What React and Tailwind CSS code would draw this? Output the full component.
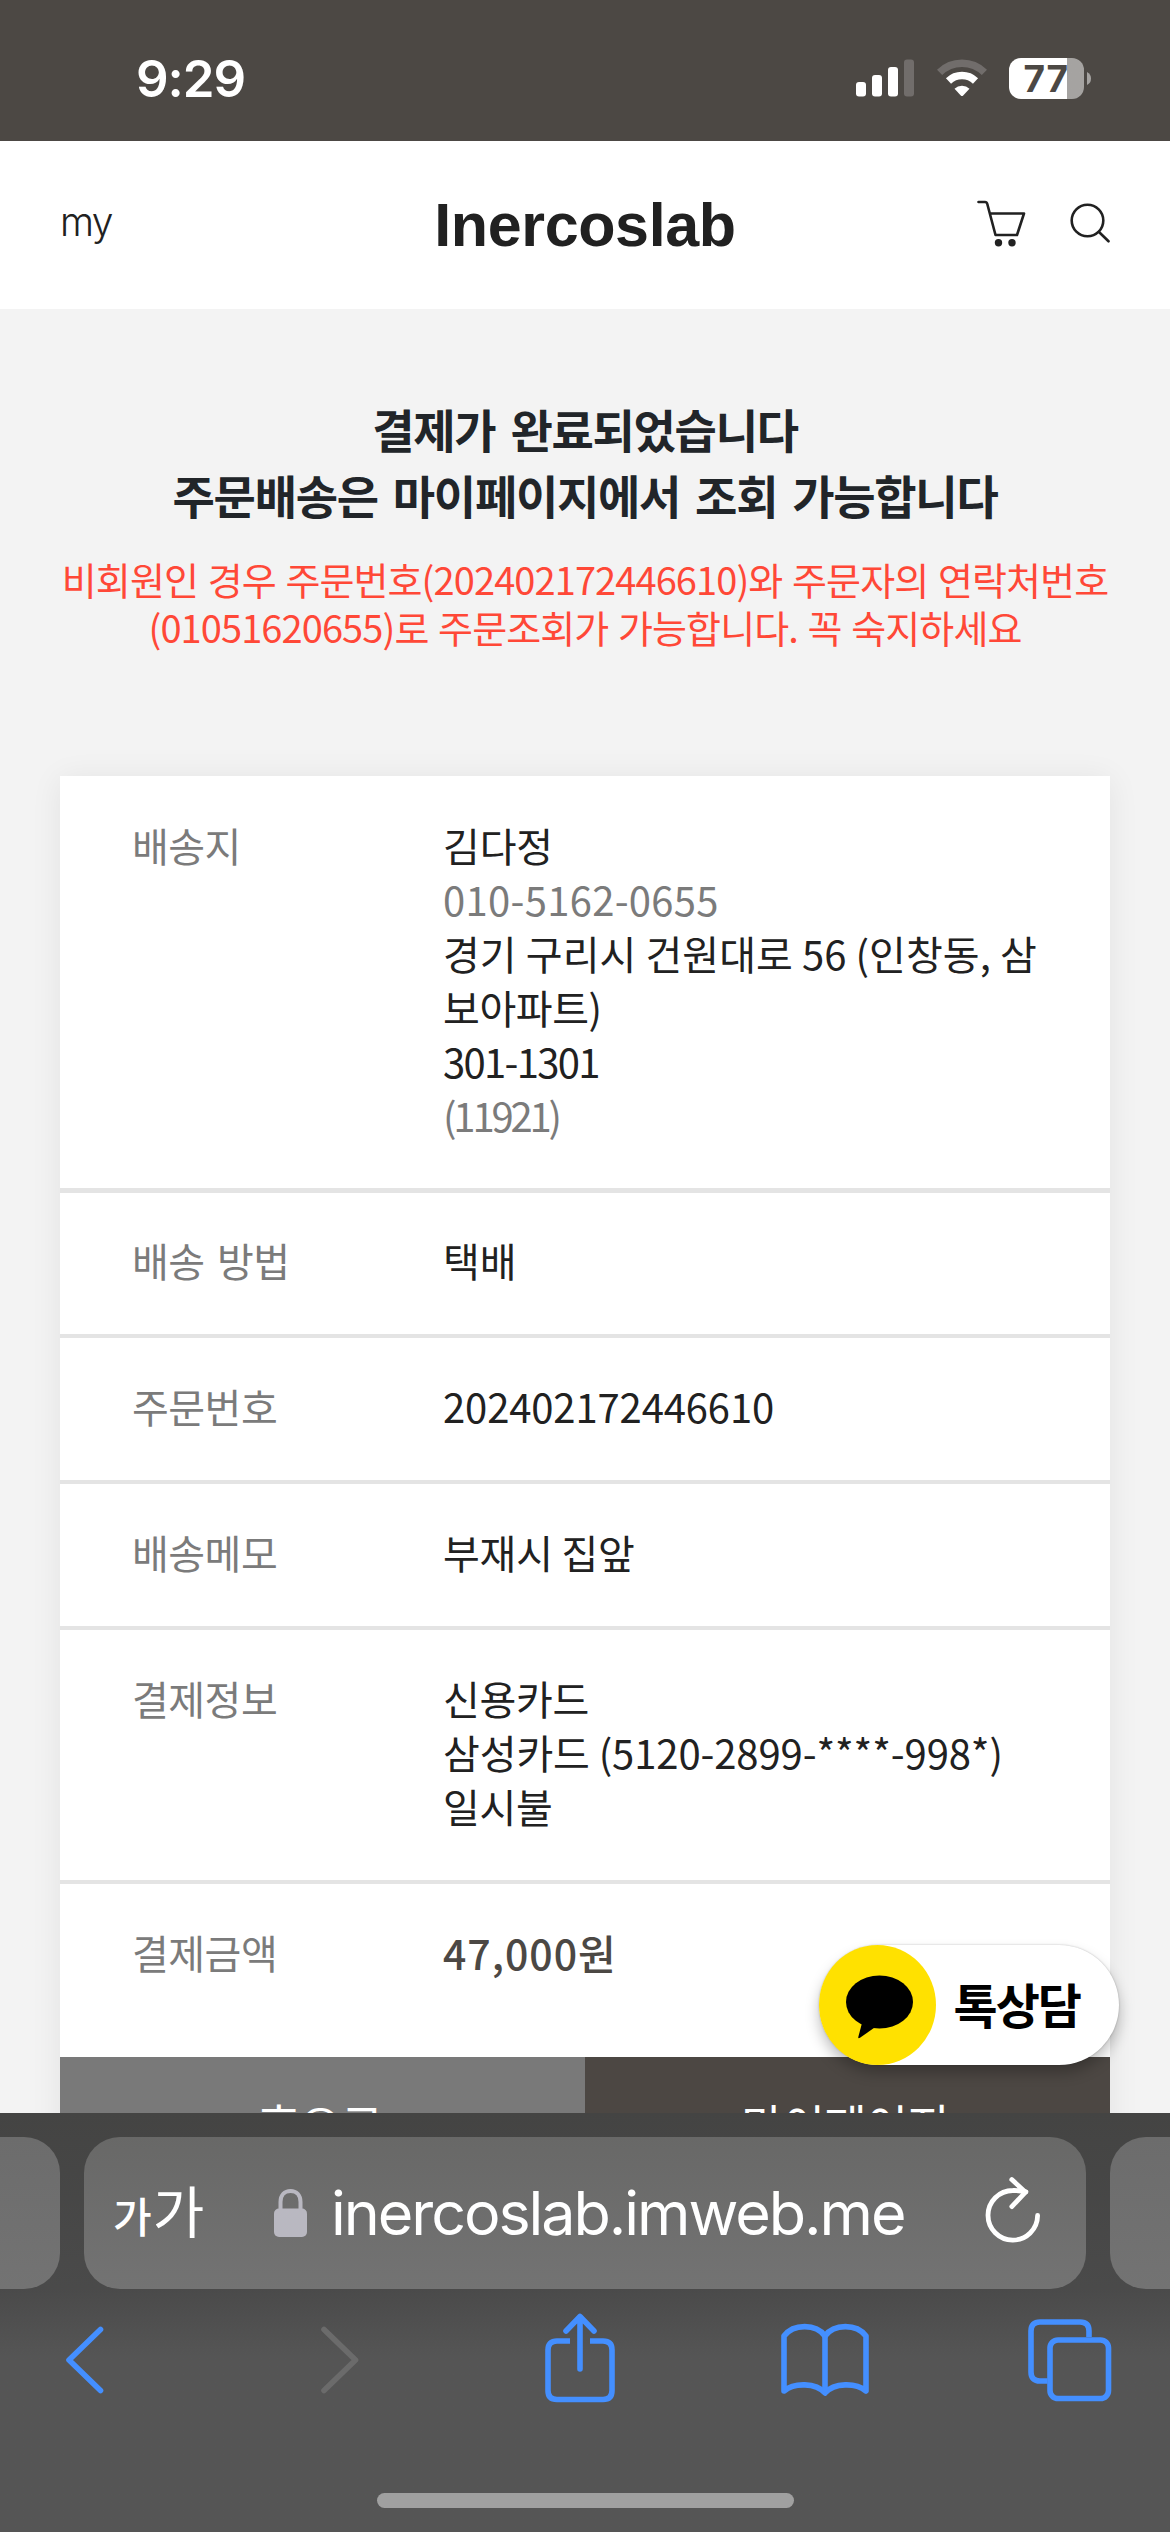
function SignalIcon() {
  return (
    <svg width="58" height="38" viewBox="0 0 58 38">
      <rect x="0" y="23" width="10" height="14.5" rx="3" fill="#fff" />
      <rect x="16" y="16" width="10" height="21.5" rx="3" fill="#fff" />
      <rect x="32" y="8" width="10" height="29.5" rx="3" fill="#fff" />
      <rect x="48" y="0.5" width="10" height="37" rx="3" fill="#716d6b" />
    </svg>
  );
}

function WifiIcon() {
  return (
    <svg width="50" height="38" viewBox="0 0 50 38" fill="none">
      <path d="M2.6 13.4 A32 32 0 0 1 47.4 13.4" stroke="#716d6b" strokeWidth="7.4" />
      <path d="M11.5 22 A19.5 19.5 0 0 1 38.5 22" stroke="#fff" strokeWidth="7.4" />
      <path d="M17.5 29.8 A11 11 0 0 1 32.5 29.8 L26.2 36.6 Q25 37.6 23.8 36.6 Z" fill="#fff" />
    </svg>
  );
}

function Battery() {
  return (
    <div className="flex items-center gap-[3px]">
      <div className="flex h-[41px] w-[75px] items-center rounded-[12px] bg-gradient-to-r from-white from-[77.5%] to-[#a5a3a1] to-[77.5%] pl-[14.5px]">
        <span className="font-['Inter',sans-serif] text-[37px] leading-none font-bold tracking-[0.7px] text-[#4c4844]">77</span>
      </div>
      <svg width="4" height="13" viewBox="0 0 4 13">
        <path d="M0 0 Q4 2 4 6.5 Q4 11 0 13 Z" fill="#a5a3a1" />
      </svg>
    </div>
  );
}

function CartIcon() {
  return (
    <svg width="49" height="48" viewBox="0 0 49 48" fill="none" stroke="#212121" strokeWidth="2.6" strokeLinecap="round" strokeLinejoin="round">
      <path d="M1.5 3 H8 Q9.8 3 10.3 5 L18.5 36 H40 L47 14.5 H13" />
      <circle cx="21.5" cy="43.8" r="3.7" fill="#212121" stroke="none" />
      <circle cx="35" cy="43.8" r="3.7" fill="#212121" stroke="none" />
    </svg>
  );
}

function SearchIcon() {
  return (
    <svg width="40" height="40" viewBox="0 0 40 40" fill="none" stroke="#212121" strokeWidth="2.6" strokeLinecap="round">
      <circle cx="17.5" cy="17.5" r="15.8" />
      <path d="M29 29 L38.5 38.3" />
    </svg>
  );
}

function LockIcon() {
  return (
    <svg width="33" height="48" viewBox="0 0 33 48" fill="none">
      <path d="M6.5 22 V13 C6.5 6 10.5 2 16.5 2 C22.5 2 26.5 6 26.5 13 V22" stroke="#b9b8c1" strokeWidth="4" />
      <rect x="0" y="19.5" width="33" height="28.5" rx="5" fill="#b9b8c1" />
    </svg>
  );
}

function ReloadIcon() {
  return (
    <svg width="56" height="68" viewBox="0 0 56 68" fill="none" stroke="#fff" strokeWidth="4.8" strokeLinecap="round" strokeLinejoin="round">
      <path d="M52.6 38.5 A24.8 24.8 0 1 1 27.8 13.5 Q34 13.3 41 14.8" />
      <path d="M26.8 2.6 L40.5 15.2 L26.8 29.6" />
    </svg>
  );
}

function BackIcon() {
  return (
    <svg width="40" height="68" viewBox="0 0 40 68" fill="none" stroke="#448fff" strokeWidth="5.6" strokeLinecap="round" strokeLinejoin="round">
      <path d="M35.5 3.5 L4 34 L35.5 64.5" />
    </svg>
  );
}

function ForwardIcon() {
  return (
    <svg width="40" height="68" viewBox="0 0 40 68" fill="none" stroke="#6b6b6b" strokeWidth="5.6" strokeLinecap="round" strokeLinejoin="round">
      <path d="M4 3.5 L35.5 34 L4 64.5" />
    </svg>
  );
}

function ShareIcon() {
  return (
    <svg width="70" height="90" viewBox="0 0 70 90" fill="none" stroke="#448fff" strokeWidth="5.6" strokeLinejoin="round">
      <path d="M25 28 H12 Q3 28 3 37 V77.5 Q3 86.5 12 86.5 H58 Q67 86.5 67 77.5 V37 Q67 28 58 28 H45" />
      <path d="M35 56 V4 M21 18 L35 3.5 L49 18" strokeLinecap="round" />
    </svg>
  );
}

function BookIcon() {
  return (
    <svg width="88" height="74" viewBox="0 0 88 74" fill="none" stroke="#448fff" strokeWidth="5.6" strokeLinecap="round" strokeLinejoin="round">
      <path d="M44 13 C35 0.5 12.5 0.5 3 13 V68 C13 59.5 35 59.5 44 70 C53 59.5 75 59.5 85 68 V13 C75.5 0.5 53 0.5 44 13 Z" />
      <path d="M44 13 V69" />
    </svg>
  );
}

function TabsIcon() {
  return (
    <svg width="84" height="83" viewBox="0 0 84 83" fill="none" stroke="#448fff" strokeWidth="5.6">
      <path d="M19.5 62 H12 Q3 62 3 53 V12 Q3 3 12 3 H52 Q61 3 61 12 V18" />
      <rect x="22" y="21" width="58.5" height="58.5" rx="8" />
    </svg>
  );
}

function KakaoMark() {
  return (
    <svg width="117" height="120" viewBox="0 0 117 120">
      <ellipse cx="58.5" cy="60" rx="58.5" ry="60" fill="#ffe100" />
      <ellipse cx="60.5" cy="57" rx="33.5" ry="26.5" fill="#000" />
      <path d="M43 78 L39.3 92 Q39 94 41 92.8 L57 81.5 Z" fill="#000" />
    </svg>
  );
}

function Row({ label, className, children }) {
  return (
    <div className={`flex border-[#e4e4e4] pl-[72px] text-[40px] leading-[54px] ${className}`}>
      <div className="w-[311px] shrink-0 tracking-[-0.5px] text-[#7b7b7b]">{label}</div>
      <div className="flex flex-col whitespace-nowrap text-[#212121]">{children}</div>
    </div>
  );
}

export default function App() {
  return (
    <div className="flex h-[2532px] w-[1170px] flex-col overflow-hidden bg-[#f3f3f3] font-['Noto_Sans_CJK_KR',sans-serif]">
      <div className="flex h-[141px] shrink-0 items-center justify-between bg-[#4c4844] pt-[15px] pr-[79px] pl-[136px]">
        <span className="font-['Inter',sans-serif] text-[51px] leading-none font-semibold tracking-[-1.05px] text-white">9:29</span>
        <div className="flex items-center">
          <SignalIcon />
          <div className="ml-[22.5px]">
            <WifiIcon />
          </div>
          <div className="ml-[22.5px]">
            <Battery />
          </div>
        </div>
      </div>

      <header className="grid h-[168px] shrink-0 grid-cols-3 items-center bg-white px-[60px]">
        <span className="pb-[8px] font-['Inter',sans-serif] text-[39px] leading-none font-light tracking-[-1.6px] text-[#212121]">my</span>
        <h1 className="text-center font-['Liberation_Sans',sans-serif] text-[61px] leading-none font-bold tracking-[-0.37px] whitespace-nowrap text-[#212121]">
          Inercoslab
        </h1>
        <div className="flex items-center justify-end gap-[44px] pb-[5px]">
          <CartIcon />
          <SearchIcon />
        </div>
      </header>

      <main className="relative h-[1804px] shrink-0 overflow-hidden pt-[86px]">
        <div className="text-center whitespace-nowrap">
          <h2 className="text-[46px] leading-[66px] font-bold tracking-[-1.3px] text-[#212529] [word-spacing:6px]">
            <div>결제가 완료되었습니다</div>
            <div>주문배송은 마이페이지에서 조회 가능합니다</div>
          </h2>
          <p className="mt-[28px] text-[38px] leading-[48px] tracking-[-0.9px] text-[#ff4837] [word-spacing:2px]">
            <span className="block">비회원인 경우 주문번호(202402172446610)와 주문자의 연락처번호</span>
            <span className="block">(01051620655)로 주문조회가 가능합니다. 꼭 숙지하세요</span>
          </p>
        </div>

        <section className="mx-[60px] mt-[125px] bg-white shadow-[0_3px_30px_rgba(0,0,0,0.07)]">
          <Row label="배송지" className="h-[417px] border-b-[5px] pt-[42px]">
            <span className="tracking-[-0.15px]">김다정</span>
            <span className="tracking-[0.3px] text-[#7b7b7b]">010-5162-0655</span>
            <span className="tracking-[0.07px]">경기 구리시 건원대로 56 (인창동, 삼</span>
            <span className="tracking-[-0.42px]">보아파트)</span>
            <span className="tracking-[-1.7px]">301-1301</span>
            <span className="tracking-[-3.17px] text-[#7b7b7b]">(11921)</span>
          </Row>
          <Row label="배송 방법" className="h-[145px] border-b-4 pt-[40px] [word-spacing:4px]">
            <span>택배</span>
          </Row>
          <Row label="주문번호" className="h-[146px] border-b-4 pt-[41px]">
            <span className="tracking-[-0.13px]">202402172446610</span>
          </Row>
          <Row label="배송메모" className="h-[146px] border-b-4 pt-[41px]">
            <span className="tracking-[-0.23px]">부재시 집앞</span>
          </Row>
          <Row label="결제정보" className="h-[254px] border-b-4 pt-[41px]">
            <span className="tracking-[-0.3px]">신용카드</span>
            <span className="tracking-[-0.1px]">삼성카드 (5120-2899-****-998*)</span>
            <span className="tracking-[-0.3px]">일시불</span>
          </Row>
          <Row label="결제금액" className="h-[173px] pt-[41px]">
            <span className="text-[41px] font-medium tracking-[1px] text-[#4c4844]">47,000원</span>
          </Row>
          <div className="grid h-[132px] grid-cols-2 text-center text-[46px] leading-[132px] tracking-[-0.8px] text-white">
            <div className="bg-[#797979] pr-[5px]">홈으로</div>
            <div className="bg-[#4c4743] pr-[5px]">마이페이지</div>
          </div>
        </section>

        <div className="absolute top-[1636px] left-[819px] flex h-[120px] w-[300px] items-center rounded-full bg-white shadow-[0_0_2px_rgba(0,0,0,0.25),0_8px_14px_rgba(0,0,0,0.25)]">
          <KakaoMark />
          <span className="pb-[5px] pl-[17.5px] text-[48px] leading-none font-bold tracking-[-2px] whitespace-nowrap text-black">톡상담</span>
        </div>
      </main>

      <footer className="flex h-[419px] shrink-0 flex-col bg-gradient-to-b from-[#444443] via-[#4a4a4a] via-[42%] to-[#555555] to-[58%]">
        <div className="mt-[24px] flex h-[152px] shrink-0 justify-between text-white">
          <div className="w-[60px] rounded-r-[36px] bg-gradient-to-b from-[#6c6c6c] to-[#737373]" />
          <div className="flex w-[1002px] items-center rounded-[36px] bg-gradient-to-b from-[#686867] to-[#737373] pr-[45px] pl-[29px]">
            <div className="flex w-[161px] items-baseline gap-px pb-[8px] leading-none">
              <span className="text-[42px] font-medium">가</span>
              <span className="text-[56px]">가</span>
            </div>
            <LockIcon />
            <span className="ml-[24px] font-['Inter',sans-serif] text-[61px] leading-none tracking-[-2.05px] whitespace-nowrap">inercoslab.imweb.me</span>
            <div className="ml-auto pb-[4px]">
              <ReloadIcon />
            </div>
          </div>
          <div className="w-[60px] rounded-l-[36px] bg-gradient-to-b from-[#6c6c6c] to-[#737373]" />
        </div>
        <nav className="mt-[20px] flex h-[102px] shrink-0 items-center pl-[65px]">
          <BackIcon />
          <div className="ml-[215px]">
            <ForwardIcon />
          </div>
          <div className="ml-[184.5px] pb-[5px]">
            <ShareIcon />
          </div>
          <div className="ml-[166px]">
            <BookIcon />
          </div>
          <div className="ml-[159.5px]">
            <TabsIcon />
          </div>
        </nav>
        <div className="mx-auto mt-[82px] h-[15px] w-[417px] shrink-0 rounded-full bg-[#a0a0a0]" />
      </footer>
    </div>
  );
}
